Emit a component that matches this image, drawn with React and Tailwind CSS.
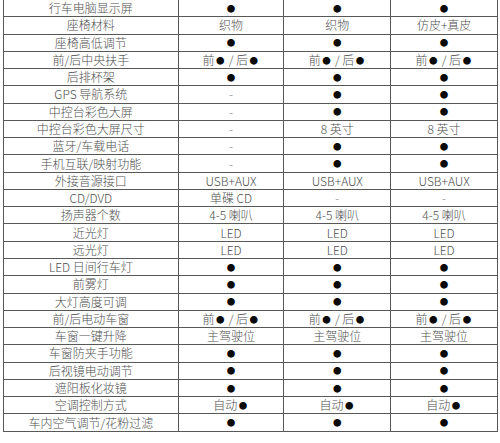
import React from "react";

const B = "●";
const rows = [
  ["行车电脑显示屏", B, B, B],
  ["座椅材料", "织物", "织物", "仿皮+真皮"],
  ["座椅高低调节", B, B, B],
  ["前/后中央扶手", "前● / 后●", "前● / 后●", "前● / 后●"],
  ["后排杯架", B, B, B],
  ["GPS 导航系统", "-", B, B],
  ["中控台彩色大屏", "-", B, B],
  ["中控台彩色大屏尺寸", "-", "8 英寸", "8 英寸"],
  ["蓝牙/车载电话", "-", B, B],
  ["手机互联/映射功能", "-", B, B],
  ["外接音源接口", "USB+AUX", "USB+AUX", "USB+AUX"],
  ["CD/DVD", "单碟 CD", "-", "-"],
  ["扬声器个数", "4-5 喇叭", "4-5 喇叭", "4-5 喇叭"],
  ["近光灯", "LED", "LED", "LED"],
  ["远光灯", "LED", "LED", "LED"],
  ["LED 日间行车灯", B, B, B],
  ["前雾灯", B, B, B],
  ["大灯高度可调", B, B, B],
  ["前/后电动车窗", "前● / 后●", "前● / 后●", "前● / 后●"],
  ["车窗一键升降", "主驾驶位", "主驾驶位", "主驾驶位"],
  ["车窗防夹手功能", B, B, B],
  ["后视镜电动调节", B, B, B],
  ["遮阳板化妆镜", B, B, B],
  ["空调控制方式", "自动●", "自动●", "自动●"],
  ["车内空气调节/花粉过滤", B, B, B],
];

function Dot() {
  return <span className="text-[#0a0a0a] text-[8.5px] leading-none mx-[1.5px]">●</span>;
}

function Cell({ v, w }) {
  const isDash = v === "-";
  const parts = v.split("●");
  return (
    <div
      className={`${w} h-full flex items-center justify-center border-r border-[#585858] whitespace-nowrap ${
        isDash ? "text-[#888]" : "text-[#505050]"
      }`}
    >
      <span className="leading-none flex items-center">
        {parts.map((p, i) => (
          <React.Fragment key={i}>
            {p && <span className="whitespace-pre">{p}</span>}
            {i < parts.length - 1 && <Dot />}
          </React.Fragment>
        ))}
      </span>
    </div>
  );
}

export default function App() {
  return (
    <div
      className="w-[500px] h-[443px] bg-white overflow-hidden pl-[3px] font-light"
      style={{ fontFamily: '"Noto Sans CJK SC", "Noto Sans", sans-serif' }}
    >
      <div className="w-[495px] border-l border-[#585858] text-[12px]">
        {rows.map((r, i) => (
          <div key={i} className="flex h-[17.28px] border-b border-[#585858]">
            <Cell v={r[0]} w="w-[175px]" />
            <Cell v={r[1]} w="w-[106px]" />
            <Cell v={r[2]} w="w-[107px]" />
            <Cell v={r[3]} w="w-[107px]" />
          </div>
        ))}
      </div>
    </div>
  );
}
